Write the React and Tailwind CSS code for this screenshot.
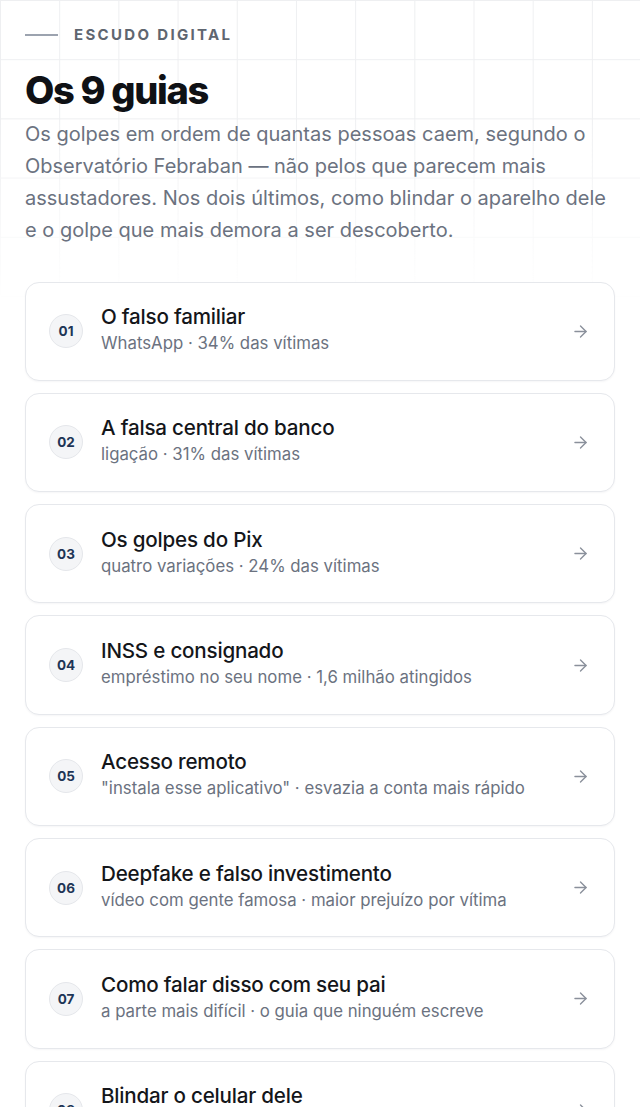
import React from 'react';
import { ArrowRight } from 'lucide-react';

const guias = [
  { n: '01', title: 'O falso familiar', sub: 'WhatsApp · 34% das vítimas' },
  { n: '02', title: 'A falsa central do banco', sub: 'ligação · 31% das vítimas' },
  { n: '03', title: 'Os golpes do Pix', sub: 'quatro variações · 24% das vítimas' },
  { n: '04', title: 'INSS e consignado', sub: 'empréstimo no seu nome · 1,6 milhão atingidos' },
  { n: '05', title: 'Acesso remoto', sub: '"instala esse aplicativo" · esvazia a conta mais rápido' },
  { n: '06', title: 'Deepfake e falso investimento', sub: 'vídeo com gente famosa · maior prejuízo por vítima' },
  { n: '07', title: 'Como falar disso com seu pai', sub: 'a parte mais difícil · o guia que ninguém escreve' },
  { n: '08', title: 'Blindar o celular dele', sub: 'passo a passo · configurações que protegem' },
  { n: '09', title: 'O golpe do amor', sub: 'o que mais demora a ser descoberto' },
];

const GuiaCard = ({ n, title, sub }) => (
  <a
    href="#"
    className="flex items-center h-[99.3px] rounded-[14px] border border-[#e6e8ec] bg-white pl-[23px] pr-[24px] shadow-[0_1px_2px_rgba(16,24,40,0.04)]"
  >
    <div className="flex h-[34px] w-[34px] shrink-0 items-center justify-center rounded-full border border-[#e5e7eb] bg-[#f4f5f7] text-[13.5px] font-bold text-[#1e3556]">
      {n}
    </div>
    <div className="ml-[18px] flex-1 min-w-0 pb-[4px]">
      <p className="text-[20.6px] font-medium leading-[28px] tracking-[-0.01em] text-[#14161a]">{title}</p>
      <p className="text-[16.8px] leading-[24px] text-[#6b7280]">{sub}</p>
    </div>
    <ArrowRight className="h-[19px] w-[19px] shrink-0 text-[#8a909b]" strokeWidth={1.75} />
  </a>
);

export default function App() {
  return (
    <div className="relative min-h-screen overflow-hidden bg-white font-['Inter',sans-serif]">
      <div className="pointer-events-none absolute inset-x-0 top-0 h-[300px] bg-[linear-gradient(to_right,#eeeff1_1px,transparent_1px),linear-gradient(to_bottom,#eeeff1_1px,transparent_1px)] bg-[size:59.2px_59.2px] [mask-image:linear-gradient(to_bottom,black_40%,transparent)]" />
      <div className="relative px-[25px] pt-[24px]">
        <div className="flex items-center gap-[16px]">
          <span className="h-[2px] w-[33px] bg-[#9ca3af]" />
          <span className="text-[15px] font-bold tracking-[0.155em] text-[#5f6670]">ESCUDO DIGITAL</span>
        </div>
        <h1 className="mt-[20px] text-[38px] font-extrabold leading-[46px] tracking-[-0.035em] text-[#0f1115]">
          Os 9 guias
        </h1>
        <p className="mt-[5px] text-[20px] leading-[32px] text-[#6b7280]">
          Os golpes em ordem de quantas pessoas caem, segundo o Observatório Febraban — não pelos que parecem mais assustadores. Nos dois últimos, como blindar o aparelho dele e o golpe que mais demora a ser descoberto.
        </p>
        <div className="mt-[36px] flex flex-col gap-[12px] pb-10">
          {guias.map((g) => (
            <GuiaCard key={g.n} {...g} />
          ))}
        </div>
      </div>
    </div>
  );
}
